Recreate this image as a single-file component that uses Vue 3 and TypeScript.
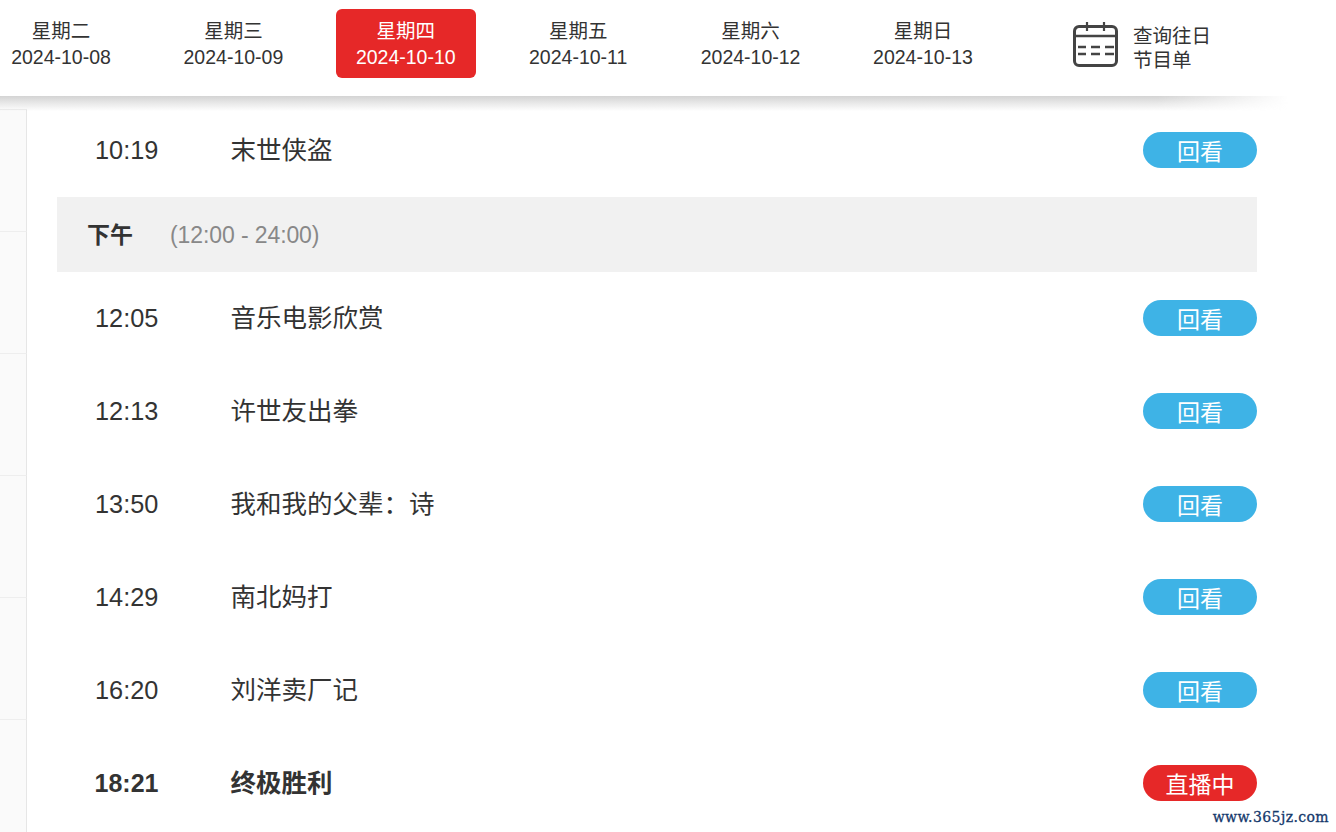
<script setup lang="ts">
interface Day { week: string; date: string; active?: boolean }
interface Show { time: string; title: string; live?: boolean }

const days: Day[] = [
  { week: '星期二', date: '2024-10-08' },
  { week: '星期三', date: '2024-10-09' },
  { week: '星期四', date: '2024-10-10', active: true },
  { week: '星期五', date: '2024-10-11' },
  { week: '星期六', date: '2024-10-12' },
  { week: '星期日', date: '2024-10-13' },
]
const morning: Show[] = [{ time: '10:19', title: '末世侠盗' }]
const afternoon: Show[] = [
  { time: '12:05', title: '音乐电影欣赏' },
  { time: '12:13', title: '许世友出拳' },
  { time: '13:50', title: '我和我的父辈\uFF1A诗' },
  { time: '14:29', title: '南北妈打' },
  { time: '16:20', title: '刘洋卖厂记' },
  { time: '18:21', title: '终极胜利', live: true },
]
const sideCells = [1, 2, 3, 4, 5, 6]
</script>

<template>
  <div class="page">
    <header class="top">
      <nav class="days">
        <div v-for="d in days" :key="d.date" class="day" :class="{ active: d.active }">
          <span>{{ d.week }}</span>
          <span>{{ d.date }}</span>
        </div>
      </nav>
      <div class="history">
        <svg class="cal" width="45" height="45" viewBox="0 0 45 45" fill="none" stroke="#444">
          <rect x="1.500" y="4.500" width="42" height="39" rx="4.500" stroke-width="3" />
          <path d="M2 14H43" stroke-width="2.500" />
          <path d="M14 0V9M31 0V9" stroke-width="2.200" />
          <path d="M5 25H13M18 25H27M32 25H41M5 32H13M18 32H27M32 32H41" stroke-width="2.500" />
        </svg>
        <div class="history-text">查询往日<br />节目单</div>
      </div>
    </header>

    <main class="main">
      <aside class="side">
        <div v-for="c in sideCells" :key="c" class="cell"></div>
      </aside>
      <section class="list">
        <div v-for="s in morning" :key="s.time" class="row">
          <span class="time">{{ s.time }}</span>
          <span class="title">{{ s.title }}</span>
          <span class="pill">回看</span>
        </div>
        <div class="band">
          <strong>下午</strong>
          <span class="range">(12:00 - 24:00)</span>
        </div>
        <div v-for="s in afternoon" :key="s.time" class="row" :class="{ live: s.live }">
          <span class="time">{{ s.time }}</span>
          <span class="title">{{ s.title }}</span>
          <span class="pill">{{ s.live ? '直播中' : '回看' }}</span>
        </div>
      </section>
    </main>
    <div class="mark">www.365jz.com</div>
  </div>
</template>

<style>
html, body { margin: 0; overflow: hidden; background: #fff; }
</style>

<style scoped>
.page {
  position: relative;
  height: 832px;
  overflow: hidden;
  background: #fff;
  color: #333;
  font-family: "Liberation Sans", "Noto Sans CJK SC", sans-serif;
}
.top {
  position: relative;
  z-index: 1;
  height: 96px;
  display: flex;
  background: #fff;
}
.top::after {
  content: "";
  position: absolute;
  left: 0;
  top: 96px;
  width: 1288px;
  height: 15px;
  background: linear-gradient(#d4d4d4, rgba(212, 212, 212, 0.5) 50%, rgba(212, 212, 212, 0));
  -webkit-mask-image: linear-gradient(to right, #000 calc(100% - 130px), transparent);
  mask-image: linear-gradient(to right, #000 calc(100% - 130px), transparent);
}
.days {
  display: flex;
  gap: 32.4px;
  margin-left: -9px;
  padding-top: 9px;
}
.day {
  box-sizing: border-box;
  width: 140px;
  height: 69px;
  border-radius: 6px;
  display: flex;
  flex-direction: column;
  align-items: center;
  justify-content: center;
  font-size: 19.500px;
  line-height: 26px;
  padding-top: 1px;
}
.day.active { background: #e62828; color: #fff; }
.history {
  display: flex;
  align-items: flex-start;
  gap: 15px;
  margin-left: 80px;
  padding-top: 22px;
}
.cal { display: block; flex: none; }
.history-text { font-size: 19.500px; line-height: 24px; margin-top: 2px; }
.main { display: flex; }
.side { width: 27px; margin-top: 13px; flex: none; }
.cell {
  box-sizing: border-box;
  height: 122px;
  background: #fafafa;
  border-top: 1px solid #eee;
  border-right: 1px solid #e6e6e6;
}
.list { width: 1200px; margin-left: 30px; padding-top: 8px; }
.row {
  height: 93px;
  display: flex;
  align-items: center;
  font-size: 25.300px;
}
.time { width: 135.500px; margin-left: 38px; }
.title { flex: 1; position: relative; top: -3px; font-size: 25.500px; }
.pill {
  position: relative;
  top: -1px;
  box-sizing: border-box;
  width: 114px;
  height: 36px;
  border-radius: 18px;
  background: #3eb3e6;
  color: #fff;
  font-size: 23px;
  line-height: 40px;
  text-align: center;
}
.live .time { font-weight: 700; font-size: 25px; margin-left: 37.500px; width: 136px; }
.live .title { font-weight: 700; }
.live .pill { background: #e62828; }
.band {
  height: 75px;
  box-sizing: border-box;
  padding-left: 30px;
  display: flex;
  align-items: center;
  gap: 37px;
  background: #f1f1f1;
  font-size: 23px;
  color: #888;
}
.band strong { font-size: 23px; color: #333; position: relative; top: -2px; }
.range { position: relative; top: 1px; letter-spacing: -0.1px; }
.mark {
  position: absolute;
  right: 7px;
  bottom: 6px;
  font-family: "DejaVu Serif", serif;
  font-size: 14px;
  -webkit-text-stroke: 0.3px #14386b;
  line-height: 18px;
  color: #14386b;
  letter-spacing: 0.4px;
}
</style>
